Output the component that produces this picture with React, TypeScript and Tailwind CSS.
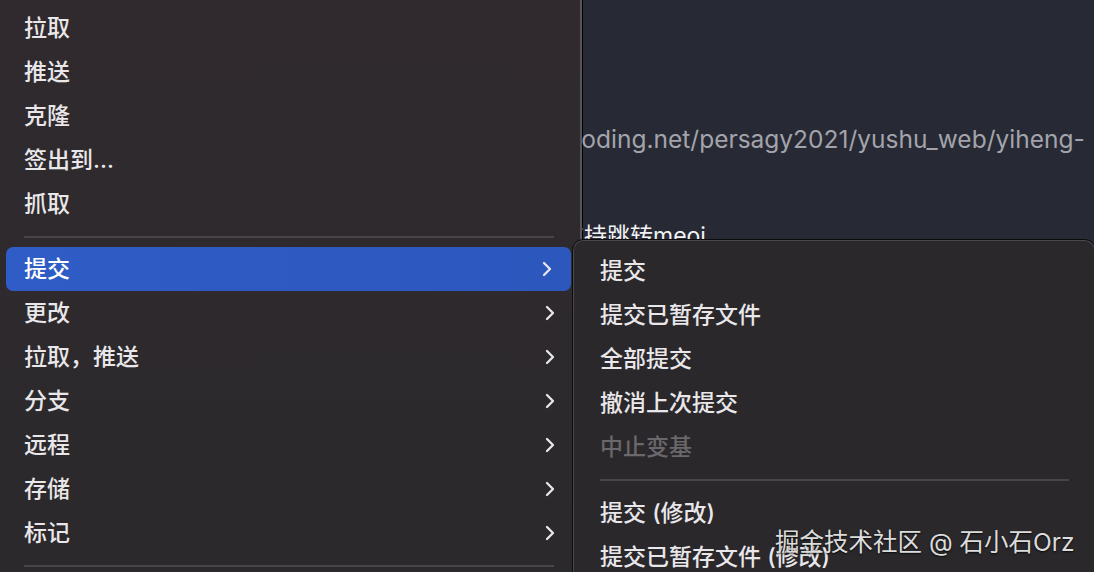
import React from 'react'

const Chevron = () => (
  <svg width="10" height="16" viewBox="0 0 10 16" fill="none">
    <path d="M2 2l6 6-6 6" stroke="#e9e7ea" strokeWidth="2.3" strokeLinecap="round" strokeLinejoin="round" />
  </svg>
)

const topItems = ['拉取', '推送', '克隆', '签出到…', '抓取']
const subItems = ['提交', '更改', '拉取，推送', '分支', '远程', '存储', '标记']

const commitItems: { label: string; disabled?: boolean }[] = [
  { label: '提交' },
  { label: '提交已暂存文件' },
  { label: '全部提交' },
  { label: '撤消上次提交' },
  { label: '中止变基', disabled: true },
]

const font = "font-['Inter','Noto_Sans_CJK_SC',sans-serif]"

export default function App() {
  return (
    <div className={`relative flex h-[572px] w-[1094px] overflow-hidden text-[23px] font-medium text-[#e9e7ea] ${font}`}>
      {/* main menu */}
      <div className="relative z-10 flex w-[582px] shrink-0 flex-col border-r-2 border-[#575658] bg-gradient-to-b from-[#302a2e] to-[#2b292c] pt-[6px]">
        {topItems.map((item) => (
          <div key={item} className="flex h-[44px] shrink-0 items-center px-[24px]">
            {item}
          </div>
        ))}
        <div className="flex h-[21px] shrink-0 items-center pl-[24px] pr-[26px]">
          <div className="h-[2px] w-full bg-[#48464a]" />
        </div>
        {subItems.map((item, i) => (
          <div
            key={item}
            className={
              i === 0
                ? 'mx-[6px] mr-[9px] flex h-[44px] shrink-0 items-center justify-between rounded-[7px] bg-gradient-to-r from-[#2f5cc6] to-[#2c57bd] pl-[18px] pr-[19px] text-white'
                : 'flex h-[44px] shrink-0 items-center justify-between pl-[24px] pr-[25px]'
            }
          >
            <span>{item}</span>
            <Chevron />
          </div>
        ))}
        <div className="flex h-[21px] shrink-0 items-center pl-[24px] pr-[26px]">
          <div className="h-[2px] w-full bg-[#48464a]" />
        </div>
      </div>

      {/* editor behind */}
      <div className="flex-1 border-l border-black bg-[#272934] pt-[121px] font-normal">
        <div className="-ml-[37px] whitespace-nowrap text-[24.5px] text-[#a3a4ab]">e.coding.net/persagy2021/yushu_web/yiheng-</div>
        <div className="-ml-[22px] mt-[61px] whitespace-nowrap text-[#f2f2f4]">支持跳转meoi</div>
      </div>

      {/* commit submenu */}
      <div className="absolute left-[572px] top-[239px] z-20 w-[524px] rounded-tl-[11px] rounded-tr-[11px] border border-[#0c0b0d] bg-[#2a282b] pt-[9px] shadow-[inset_0_0_0_1px_#4a484c]">
        {commitItems.map((item) => (
          <div
            key={item.label}
            className={`flex h-[44px] items-center pl-[27px] ${item.disabled ? 'text-[#6a686c]' : ''}`}
          >
            {item.label}
          </div>
        ))}
        <div className="flex h-[22px] items-center pl-[27px] pr-[26px]">
          <div className="h-[2px] w-full bg-[#47454a]" />
        </div>
        <div className="flex h-[44px] items-center pl-[27px]">提交 (修改)</div>
        <div className="flex h-[44px] items-center pl-[27px]">提交已暂存文件 (修改)</div>
      </div>

      {/* watermark */}
      <div className="absolute left-[775px] top-[524px] z-30 whitespace-nowrap text-[24.5px] font-normal text-[#dcdcdc] [text-shadow:0_1px_2px_rgba(0,0,0,0.8)]">
        掘金技术社区 @ 石小石Orz
      </div>
    </div>
  )
}
